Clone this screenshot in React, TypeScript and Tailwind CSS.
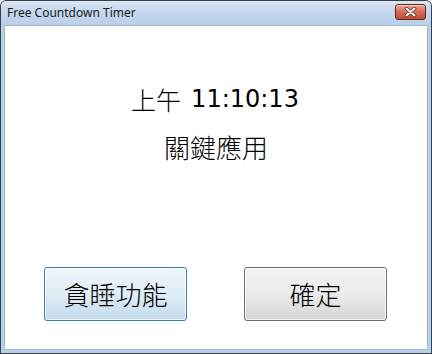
export default function App() {
  return (
    <div className="w-[432px] h-[354px] bg-[#3a3f45] rounded-t-[6px] p-px">
      <div className="h-full flex flex-col rounded-t-[5px] bg-[#b9d1ea]">
        <div className="h-[24px] flex items-center justify-between pl-[6px] pr-[5px] rounded-t-[5px] bg-gradient-to-b from-[#dae6f3] via-[#c2d6ec] to-[#b9d1ea]">
          <span className="text-[12px] text-[#1a1a1a] font-['Noto_Sans',sans-serif] leading-none pb-[1px]">
            Free Countdown Timer
          </span>
          <button className="w-[31px] h-[16px] mb-[3px] rounded-[3px] border border-[#6b2418] bg-gradient-to-b from-[#e8a898] via-[#d36a55] to-[#c24a32] flex items-center justify-center shadow-[inset_0_1px_0_rgba(255,255,255,0.5)]">
            <svg width="13" height="10" viewBox="0 0 13 10">
              <path d="M2.5 1.5 L10.5 8.5 M10.5 1.5 L2.5 8.5" stroke="#5a2a22" strokeWidth="3.6" strokeLinecap="round" />
              <path d="M2.5 1.5 L10.5 8.5 M10.5 1.5 L2.5 8.5" stroke="#ffffff" strokeWidth="2" strokeLinecap="round" />
            </svg>
          </button>
        </div>
        <div className="flex-1 mx-[3px] mb-[3px] bg-white border border-[#9fb6cf] flex flex-col items-center">
          <div className="pt-[57px] h-[32px] box-content flex items-center text-black leading-[32px] -ml-[2px]">
            <span className="text-[25px] font-['Noto_Sans_CJK_TC',sans-serif] font-light">上午</span>
            <span className="text-[24px] font-['DejaVu_Sans',sans-serif] ml-[10px]">11:10:13</span>
          </div>
          <div className="mt-[16px] text-[26px] leading-[32px] text-black font-['Noto_Sans_CJK_TC',sans-serif] font-light">
            關鍵應用
          </div>
          <div className="mt-auto mb-[28px] self-stretch flex pl-[39px] gap-[57px]">
            <button className="w-[143px] h-[54px] rounded-[3px] border border-[#3c7fb1] bg-gradient-to-b from-[#eef5fb] via-[#e0edf7] to-[#c3dbed] shadow-[inset_0_0_0_1px_rgba(255,255,255,0.8)] text-[26px] text-black font-['Noto_Sans_CJK_TC',sans-serif] font-light leading-none">
              貪睡功能
            </button>
            <button className="w-[143px] h-[54px] rounded-[3px] border border-[#707070] bg-gradient-to-b from-[#f2f2f2] via-[#ebebeb] to-[#d6d6d6] shadow-[inset_0_0_0_1px_rgba(255,255,255,0.8)] text-[26px] text-black font-['Noto_Sans_CJK_TC',sans-serif] font-light leading-none">
              確定
            </button>
          </div>
        </div>
      </div>
    </div>
  )
}
